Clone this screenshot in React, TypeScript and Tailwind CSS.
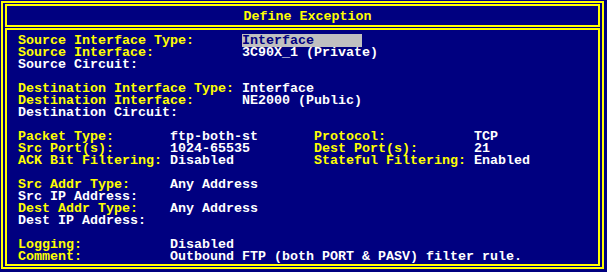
type Tone = "label" | "dim" | "value" | "selected";

interface Cell {
  text: string;
  tone: Tone;
  width?: number; // px, one character is 8px
}

const toneClass: Record<Tone, string> = {
  label: "text-[#ffff00]",
  dim: "text-white",
  value: "text-white",
  selected: "bg-[#c0c0c0] text-[#000080] -mt-px pt-px h-[13px]",
};

// one entry per screen line, empty array = blank line
const rows: Cell[][] = [
  [
    { text: "Source Interface Type:", tone: "label", width: 224 },
    { text: "Interface", tone: "selected", width: 120 },
  ],
  [
    { text: "Source Interface:", tone: "label", width: 224 },
    { text: "3C90X_1 (Private)", tone: "value" },
  ],
  [{ text: "Source Circuit:", tone: "dim" }],
  [],
  [
    { text: "Destination Interface Type:", tone: "label", width: 224 },
    { text: "Interface", tone: "value" },
  ],
  [
    { text: "Destination Interface:", tone: "label", width: 224 },
    { text: "NE2000 (Public)", tone: "value" },
  ],
  [{ text: "Destination Circuit:", tone: "dim" }],
  [],
  [
    { text: "Packet Type:", tone: "label", width: 152 },
    { text: "ftp-both-st", tone: "value", width: 144 },
    { text: "Protocol:", tone: "label", width: 160 },
    { text: "TCP", tone: "value" },
  ],
  [
    { text: "Src Port(s):", tone: "label", width: 152 },
    { text: "1024-65535", tone: "value", width: 144 },
    { text: "Dest Port(s):", tone: "label", width: 160 },
    { text: "21", tone: "value" },
  ],
  [
    { text: "ACK Bit Filtering:", tone: "label", width: 152 },
    { text: "Disabled", tone: "value", width: 144 },
    { text: "Stateful Filtering:", tone: "label", width: 160 },
    { text: "Enabled", tone: "value" },
  ],
  [],
  [
    { text: "Src Addr Type:", tone: "label", width: 152 },
    { text: "Any Address", tone: "value" },
  ],
  [{ text: "Src IP Address:", tone: "dim" }],
  [
    { text: "Dest Addr Type:", tone: "label", width: 152 },
    { text: "Any Address", tone: "value" },
  ],
  [{ text: "Dest IP Address:", tone: "dim" }],
  [],
  [
    { text: "Logging:", tone: "label", width: 152 },
    { text: "Disabled", tone: "value" },
  ],
  [
    { text: "Comment:", tone: "label", width: 152 },
    { text: "Outbound FTP (both PORT & PASV) filter rule.", tone: "value" },
  ],
];

export default function App() {
  return (
    <div className="w-[607px] h-[272px] bg-[#000080] pl-px pt-px font-['Liberation_Mono',monospace] font-bold text-[13.333px] leading-[12px] whitespace-pre">
      <div className="w-[603px] h-[268px] border-2 border-[#ffff00] px-[2px] py-px flex flex-col gap-px">
        {/* title box */}
        <div className="h-[23px] shrink-0 border-2 border-[#ffff00] pt-[5px] pl-[10px] text-center text-[#ffff00]">
          Define Exception
        </div>

        {/* form body */}
        <div className="flex-1 border-2 border-[#ffff00] pt-[5px] pl-[11px]">
          {rows.map((row, i) => (
            <div key={i} className="flex h-[12px]">
              {row.map((cell) => (
                <span
                  key={cell.text}
                  className={`block shrink-0 ${toneClass[cell.tone]}`}
                  style={cell.width ? { width: cell.width } : undefined}
                >
                  {cell.text}
                </span>
              ))}
            </div>
          ))}
        </div>
      </div>
    </div>
  );
}
